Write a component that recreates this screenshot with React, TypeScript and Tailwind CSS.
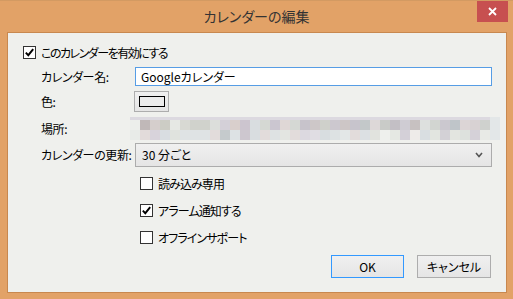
import type { ReactNode } from "react";

const font = "font-['Meiryo_UI','Noto_Sans_CJK_JP',sans-serif] [font-feature-settings:'palt']";

const topStrip = "bg-[#dcd9e0]";

const rowA = [
  "bg-[#eceeeb]", "bg-[#c0b8b8]", "bg-[#d5cecc]", "bg-[#ccccc5]", "bg-[#e6e8e4]", "bg-[#d8d9d3]",
  "bg-[#d0d2cc]", "bg-[#d0d2cc]", "bg-[#dcdedb]", "bg-[#d4d0d8]", "bg-[#d9cfcc]", "bg-[#ccc5cf]",
  "bg-[#d9dde0]", "bg-[#d5d8d3]", "bg-[#cbc6d0]", "bg-[#dfd7d6]", "bg-[#d5d8d4]", "bg-[#c7c3cb]",
  "bg-[#cdc7c8]", "bg-[#cfd0cb]", "bg-[#ccc8cf]", "bg-[#cdc6c6]", "bg-[#c7c4cc]", "bg-[#c3c8c9]",
  "bg-[#ddd8d8]", "bg-[#c9cbc8]", "bg-[#c3bfc5]", "bg-[#cfccd3]", "bg-[#c7c1c1]", "bg-[#dde0de]",
  "bg-[#d2d5d1]", "bg-[#cbc8cf]", "bg-[#bfc5c9]", "bg-[#dcd5d6]", "bg-[#d8d2d3]", "bg-[#cfd1ce]",
  "bg-[#e3e7e8]",
];

const rowB = [
  "bg-[#e8ebe8]", "bg-[#e2dbda]", "bg-[#d8d3db]", "bg-[#d9dde1]", "bg-[#e0e3de]", "bg-[#dfe3e4]",
  "bg-[#dfe3e4]", "bg-[#dfe3e4]", "bg-[#e2dcdb]", "bg-[#c5cacc]", "bg-[#dde2e4]", "bg-[#cdc7cf]",
  "bg-[#d9dde0]", "bg-[#e2dcdb]", "bg-[#dee2e3]", "bg-[#e3e5e1]", "bg-[#e2dcdb]", "bg-[#dcd9e0]",
  "bg-[#e0dde3]", "bg-[#d8dde0]", "bg-[#dde2e3]", "bg-[#e3e7e7]", "bg-[#e2dcdb]", "bg-[#dce0e3]",
  "bg-[#e1e3de]", "bg-[#eef0ed]", "bg-[#e5e8e3]", "bg-[#d4d0d8]", "bg-[#eeebe9]", "bg-[#d9dee1]",
  "bg-[#e2e5e0]", "bg-[#d3d1d6]", "bg-[#e3e5e0]", "bg-[#dde1dd]", "bg-[#d5d1d8]", "bg-[#e8eae6]",
  "bg-[#e3e7e8]",
];

function CheckBox({ checked }: { checked?: boolean }) {
  return (
    <div className="flex h-[13px] w-[13px] shrink-0 items-center justify-center border border-[#333333] bg-white">
      {checked && (
        <svg width="11" height="11" viewBox="0 0 11 11">
          <path d="M1.8 5.6 L4.3 8.2 L9.2 2.2" fill="none" stroke="#000" strokeWidth="1.9" />
        </svg>
      )}
    </div>
  );
}

function Row({ label, labelWidth = "w-[94px]", children, className = "" }: { label: string; labelWidth?: string; children: ReactNode; className?: string }) {
  return (
    <div className={`flex items-center ${className}`}>
      <div className={`${labelWidth} shrink-0 whitespace-nowrap text-[12px] tracking-[-0.4px] text-black`}>{label}</div>
      {children}
    </div>
  );
}

function Mosaic() {
  return (
    <div className="flex h-[23px] w-[370px] flex-col">
      <div className="flex h-[3px]">
        <div className={`h-full w-[360px] ${topStrip}`} />
        <div className="h-full w-[10px] bg-[#e3e7e8]" />
      </div>
      <div className="flex h-[10px]">
        {rowA.map((c, i) => (
          <div key={i} className={`h-full w-[10px] ${c}`} />
        ))}
      </div>
      <div className="flex h-[10px]">
        {rowB.map((c, i) => (
          <div key={i} className={`h-full w-[10px] ${c}`} />
        ))}
      </div>
    </div>
  );
}

function Option({ checked, label }: { checked?: boolean; label: string }) {
  return (
    <div className="flex h-[13px] items-center gap-[5px]">
      <CheckBox checked={checked} />
      <span className="whitespace-nowrap text-[12px] tracking-[-0.9px] text-black">{label}</span>
    </div>
  );
}

export default function App() {
  return (
    <div className={`flex h-[299px] w-[513px] flex-col bg-[#e2a267] ${font}`}>
      <div className="grid h-[32px] shrink-0 grid-cols-[1fr_auto_1fr] border-t border-[#d39a62]">
        <div />
        <div className="flex items-center pb-[1px] text-[14px] text-[#333333]">カレンダーの編集</div>
        <div className="flex justify-end pr-[5px]">
          <div className="flex h-[21px] w-[31px] items-center justify-center bg-[#c75050]">
            <svg width="9" height="9" viewBox="0 0 9 9">
              <path d="M1 1 L8 8 M8 1 L1 8" stroke="#fff" strokeWidth="1.8" />
            </svg>
          </div>
        </div>
      </div>

      <div className="mb-[6px] ml-[7px] mr-[6px] flex flex-1 flex-col border border-[#c8884f] bg-[#eff0ed] pl-[15px] pt-[13px]">
        <div className="flex h-[13px] items-center gap-[5px]">
          <CheckBox checked />
          <span className="whitespace-nowrap text-[12px] tracking-[-1.5px] text-black">このカレンダーを有効にする</span>
        </div>

        <div className="ml-[18px] flex flex-col">
          <Row label="カレンダー名:" className="mt-[8px] h-[19px]">
            <div className="flex h-[19px] w-[357px] items-center border border-[#569de5] bg-white pl-[5px] text-[12px] text-black">
              Googleカレンダー
            </div>
          </Row>

          <Row label="色:" className="mt-[5px] h-[21px]">
            <div className="-ml-[1px] flex h-[21px] w-[35px] items-center justify-center border border-[#adadad] bg-[linear-gradient(180deg,#f0f0f0,#e5e5e5)]">
              <div className="h-[11px] w-[26px] border border-black bg-[#ececec]" />
            </div>
          </Row>

          <Row label="場所:" labelWidth="w-[89px]" className="mt-[5px] h-[23px]">
            <Mosaic />
          </Row>

          <Row label="カレンダーの更新:" className="mt-[3px] h-[24px]">
            <div className="flex h-[24px] w-[357px] items-center justify-between border border-[#acacac] bg-[linear-gradient(180deg,#f0f0f0,#e5e5e5)] pl-[6px] pr-[8px] text-[12px] text-black">
              <span>30 分ごと</span>
              <svg width="8" height="6" viewBox="0 0 8 6">
                <path d="M1 1 L4 4.5 L7 1" fill="none" stroke="#555" strokeWidth="1.6" />
              </svg>
            </div>
          </Row>

          <div className="ml-[99px] mt-[10px] flex flex-col gap-[14px]">
            <Option label="読み込み専用" />
            <Option checked label="アラーム通知する" />
            <Option label="オフラインサポート" />
          </div>
        </div>

        <div className="mt-auto flex justify-end gap-[13px] pb-[14px] pr-[15px]">
          <button className="h-[23px] w-[73px] border border-[#3399ff] bg-[linear-gradient(180deg,#f0f0f0,#e5e5e5)] text-[12px] text-black">
            OK
          </button>
          <button className="h-[23px] w-[74px] border border-[#adadad] bg-[linear-gradient(180deg,#f0f0f0,#e5e5e5)] text-[12px] text-black">
            キャンセル
          </button>
        </div>
      </div>
    </div>
  );
}
